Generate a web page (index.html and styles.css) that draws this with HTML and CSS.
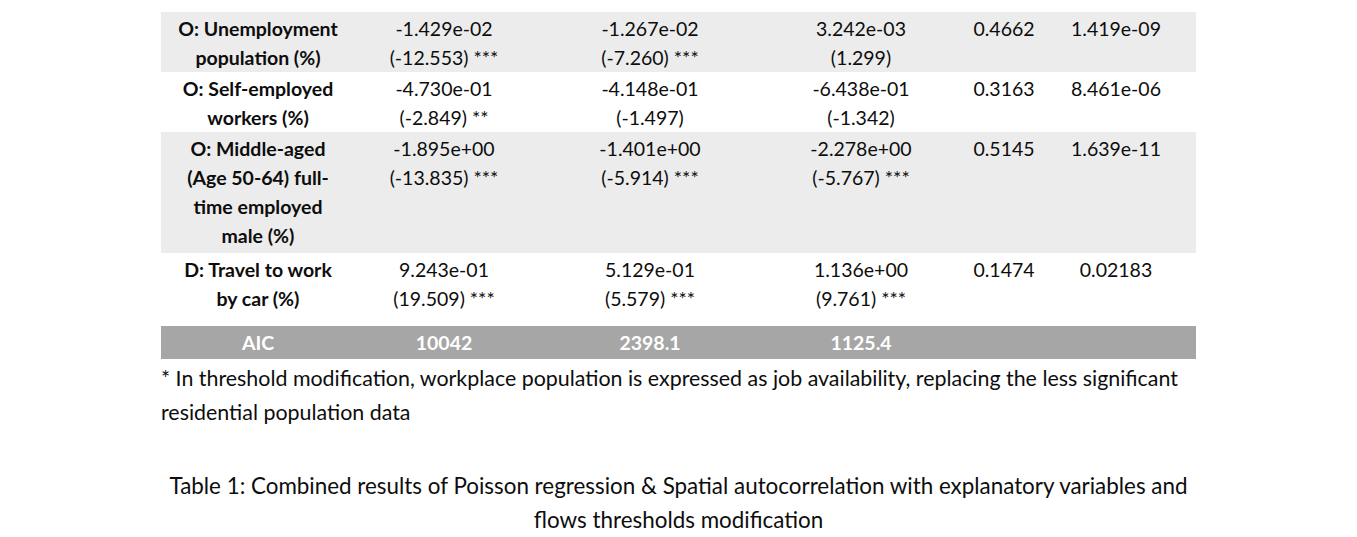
FILE: index.html
```html
<!DOCTYPE html>
<html>
<head>
<meta charset="utf-8">
<link rel="stylesheet" href="styles.css">
</head>
<body>
<div class="page">
  <table class="results">
    <colgroup>
      <col class="c1"><col class="c2"><col class="c3"><col class="c4"><col class="c5"><col class="c6">
    </colgroup>
    <tbody>
      <tr class="shade">
        <th>O: Unemployment<br>population (%)</th>
        <td>-1.429e-02<br>(-12.553) ***</td>
        <td>-1.267e-02<br>(-7.260) ***</td>
        <td>3.242e-03<br>(1.299)</td>
        <td>0.4662</td>
        <td class="last">1.419e-09</td>
      </tr>
      <tr>
        <th>O: Self-employed<br>workers (%)</th>
        <td>-4.730e-01<br>(-2.849) **</td>
        <td>-4.148e-01<br>(-1.497)</td>
        <td>-6.438e-01<br>(-1.342)</td>
        <td>0.3163</td>
        <td class="last">8.461e-06</td>
      </tr>
      <tr class="shade tall">
        <th>O: Middle-aged<br>(Age 50-64) full-<br>time employed<br>male (%)</th>
        <td>-1.895e+00<br>(-13.835) ***</td>
        <td>-1.401e+00<br>(-5.914) ***</td>
        <td>-2.278e+00<br>(-5.767) ***</td>
        <td>0.5145</td>
        <td class="last">1.639e-11</td>
      </tr>
      <tr class="spaced">
        <th>D: Travel to work<br>by car (%)</th>
        <td>9.243e-01<br>(19.509) ***</td>
        <td>5.129e-01<br>(5.579) ***</td>
        <td>1.136e+00<br>(9.761) ***</td>
        <td>0.1474</td>
        <td class="last">0.02183</td>
      </tr>
      <tr class="aic">
        <th>AIC</th>
        <td>10042</td>
        <td>2398.1</td>
        <td>1125.4</td>
        <td></td>
        <td class="last"></td>
      </tr>
    </tbody>
  </table>
  <p class="note">* In threshold modification, workplace population is expressed as job availability, replacing the less significant residential population data</p>
  <p class="caption">Table 1: Combined results of Poisson regression &amp; Spatial autocorrelation with explanatory variables and flows thresholds modification</p>
</div>
</body>
</html>
```

FILE: styles.css
```css
html, body {
  margin: 0;
  padding: 0;
  background: #ffffff;
}

.page {
  width: 1035px;
  margin-left: 161px;
  padding-top: 12px;
  font-family: Lato, "Open Sans", sans-serif;
  color: #0d0d0d;
}

.results {
  width: 1035px;
  border-collapse: collapse;
  table-layout: fixed;
  font-size: 19.5px;
  line-height: 29px;
}

.c1 { width: 194px; }
.c2 { width: 178px; }
.c3 { width: 234px; }
.c4 { width: 188px; }
.c5 { width: 98px; }
.c6 { width: 143px; }

.results th,
.results td {
  padding: 2px 0 0 0;
  text-align: center;
  vertical-align: top;
}

.results th {
  font-weight: 700;
}

.results td.last {
  padding-right: 17px;
}

.shade {
  background: #ececec;
}

.tall th,
.tall td {
  padding-bottom: 3px;
}

.spaced th,
.spaced td {
  padding-bottom: 13px;
}

.aic {
  background: #a6a6a6;
  color: #ffffff;
  font-weight: 700;
}

.aic th,
.aic td {
  padding: 0;
  height: 33px;
  line-height: 33px;
}

.note {
  margin: 2px 0 0 0;
  font-size: 21.4px;
  line-height: 34px;
}

.caption {
  margin: 40px 0 0 0;
  text-align: center;
  font-size: 22.4px;
  line-height: 34px;
}
```
